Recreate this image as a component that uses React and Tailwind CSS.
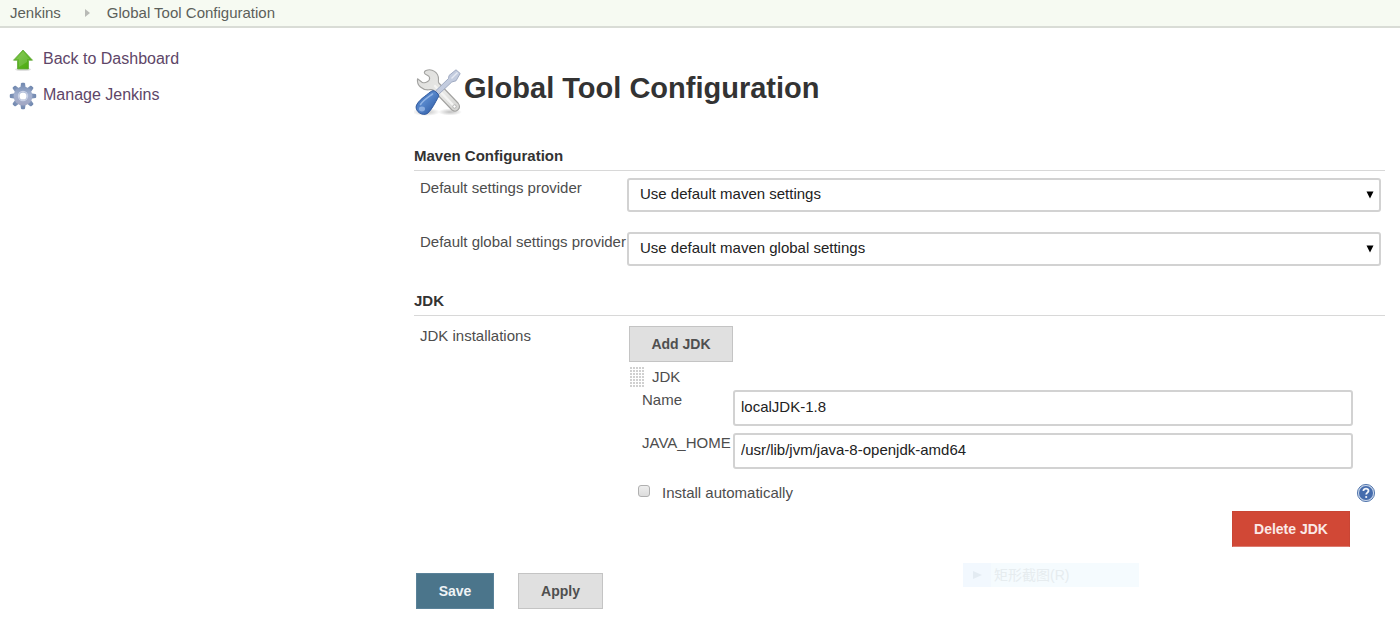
import React from "react";

function UpArrowIcon() {
  return (
    <svg width="26" height="26" viewBox="0 0 26 26" aria-hidden="true" className="shrink-0">
      <defs>
        <linearGradient id="arrowFill" x1="0" y1="0" x2="1" y2="1">
          <stop offset="0" stopColor="#7cc544" />
          <stop offset="0.5" stopColor="#5bb522" />
          <stop offset="1" stopColor="#4aa60e" />
        </linearGradient>
      </defs>
      <ellipse cx="13" cy="22.5" rx="8" ry="1.6" fill="#000" opacity="0.12" />
      <path d="M13 3 L22.5 13.2 H18.500 V22 H7.500 V13.2 H3.5 Z" fill="url(#arrowFill)" stroke="#62a83a" strokeWidth="0.8" strokeLinejoin="round" />
      <path d="M13 4.6 L19.8 12.2 H17 V15 L9 20 V12.2 H6 Z" fill="#fff" opacity="0.14" />
    </svg>
  );
}

function GearIcon() {
  const teeth = [0, 45, 90, 135, 180, 225, 270, 315];
  return (
    <svg width="28" height="28" viewBox="0 0 28 28" aria-hidden="true" className="shrink-0">
      <defs>
        <linearGradient id="gearFill" x1="0" y1="0" x2="0" y2="28" gradientUnits="userSpaceOnUse">
          <stop offset="0" stopColor="#6c84ac" />
          <stop offset="0.45" stopColor="#a3b1d0" />
          <stop offset="1" stopColor="#a3a3bd" />
        </linearGradient>
        <mask id="gearHole">
          <rect width="28" height="28" fill="#fff" />
          <circle cx="14" cy="14" r="3.600" fill="#000" />
        </mask>
      </defs>
      <g mask="url(#gearHole)" fill="url(#gearFill)">
        {teeth.map((a) => (
          <path key={a} d="M11 8 L12 1.600 Q12.200 0.800 13 0.800 H15 Q15.800 0.800 16 1.600 L17 8 Z" transform={`rotate(${a} 14 14)`} />
        ))}
        <circle cx="14" cy="14" r="9.400" />
        <circle cx="14" cy="14" r="4.600" fill="none" stroke="#c9d1e6" strokeWidth="1.200" />
      </g>
    </svg>
  );
}

function ToolsIcon() {
  return (
    <svg width="48" height="48" viewBox="0 0 48 48" aria-hidden="true" className="shrink-0">
      <defs>
        <linearGradient id="steel" x1="0" y1="0" x2="1" y2="1">
          <stop offset="0" stopColor="#dededc" />
          <stop offset="0.6" stopColor="#e8e8e6" />
          <stop offset="1" stopColor="#d2d2d0" />
        </linearGradient>
        <linearGradient id="handle" x1="0" y1="0" x2="1" y2="1">
          <stop offset="0" stopColor="#3565ae" />
          <stop offset="0.45" stopColor="#5585ca" />
          <stop offset="1" stopColor="#26529c" />
        </linearGradient>
        <radialGradient id="ground">
          <stop offset="0" stopColor="#000" stopOpacity="0.25" />
          <stop offset="1" stopColor="#000" stopOpacity="0" />
        </radialGradient>
      </defs>
      <ellipse cx="12" cy="44" rx="14" ry="4" fill="url(#ground)" />
      <ellipse cx="36" cy="44" rx="12" ry="3.5" fill="url(#ground)" />
      <path
        d="M12 2.500 C18 0 24.500 4.500 24.500 11 C24.500 13 24 14 24.800 15 L44 35 C48 40 42.500 45.500 38 42 L19 22 C18 21 17 21.500 15 21.800 C8.500 22.300 2.500 17.500 3.500 10.800 L8 14.200 C11 16 16.500 13 15.500 9.300 C15 7 11.500 7 10.500 5.200 C10 4 10.800 3 12 2.500 Z"
        fill="url(#steel)"
        stroke="#a2a2a0"
        strokeWidth="1.100"
        strokeLinejoin="round"
      />
      <path d="M21 18 L39 37" stroke="#f4f4f3" strokeWidth="2.400" strokeLinecap="round" />
      <circle cx="40.500" cy="38.500" r="1.700" fill="#fff" stroke="#a6a6a4" strokeWidth="0.8" />
      <path
        d="M21.500 23 L34.500 10.500 L35 7.500 L42 1.800 L46.200 5.500 L42 12.800 L37.800 14 L24.500 26.500 Z"
        fill="#c3ccdf"
        stroke="#98a4bc"
        strokeWidth="0.9"
        strokeLinejoin="round"
      />
      <path d="M37.500 10.500 L43.500 4.500" stroke="#e6eaf3" strokeWidth="1.500" />
      <path
        d="M16.500 23.800 C18.500 22.300 20 22.300 21.800 23.800 L24 26 C25.200 27.500 24.800 29 23.500 30.500 C21.500 34 18 41.500 13.500 45.500 C8.500 48.500 1 43.500 2.200 38 C4 32.500 11.500 28 16.500 23.800 Z"
        fill="url(#handle)"
        stroke="#2a549a"
        strokeWidth="0.9"
      />
      <path d="M6.500 36.500 C9 32.500 14.500 29 18.500 26" stroke="#8fb2e4" strokeWidth="1.600" strokeLinecap="round" fill="none" />
      <ellipse cx="8" cy="41" rx="3" ry="2.400" fill="#a4c2ec" opacity="0.7" />
    </svg>
  );
}

function HelpIcon() {
  return (
    <svg width="20" height="20" viewBox="0 0 20 20" aria-hidden="true">
      <circle cx="10" cy="10" r="8.600" fill="#c3d2e8" stroke="#5a7cb0" strokeWidth="1" />
      <circle cx="10" cy="10" r="7" fill="#456cad" />
      <path d="M7.400 8 C7.400 4.800 12.700 5 12.500 7.900 C12.400 9.700 10.200 9.700 10.200 11.600" fill="none" stroke="#f2f5fa" strokeWidth="1.800" />
      <circle cx="10.200" cy="14" r="1.100" fill="#f2f5fa" />
    </svg>
  );
}

function GripIcon() {
  const rows = [0, 3, 6, 9, 12, 15, 18];
  const cols = [0, 3, 6, 9, 12];
  return (
    <svg width="14" height="20" viewBox="0 0 14 20" aria-hidden="true" className="shrink-0">
      {rows.map((y) => cols.map((x) => <rect key={`${x}-${y}`} x={x} y={y} width="2" height="2" fill="#d0d0d0" />))}
    </svg>
  );
}

function SelectField({ id, label, value }) {
  return (
    <div className="grid grid-cols-[207px_1fr] items-start pl-[6px]">
      <label htmlFor={id} className="whitespace-nowrap text-[15px] leading-5 text-[#4d4d4d]">
        {label}
      </label>
      <div className="relative mr-1">
        <select
          id={id}
          className="block h-[34px] w-full appearance-none rounded-[3px] border-2 border-[#d2d2d2] bg-white pb-px pl-[11px] pr-8 text-[15px] text-[#222222]"
        >
          <option>{value}</option>
        </select>
        <svg width="8" height="8" viewBox="0 0 8 8" aria-hidden="true" className="pointer-events-none absolute right-[7px] top-[13px]">
          <path d="M0.500 0.500 H7.500 L4 7.500 Z" fill="#000" />
        </svg>
      </div>
    </div>
  );
}

function TextField({ id, label, value }) {
  return (
    <div className="grid grid-cols-[91px_1fr] items-start">
      <label htmlFor={id} className="text-[15px] leading-5 text-[#4d4d4d]">
        {label}
      </label>
      <input
        id={id}
        type="text"
        defaultValue={value}
        className="block h-9 w-full rounded-[3px] border-2 border-[#d2d2d2] bg-white px-[6px] pb-[3px] text-[15px] text-[#222222]"
      />
    </div>
  );
}

const grayButton = "h-9 border border-[#c4c4c4] bg-[#e0e0e0] text-[14px] font-bold text-[#4f4f4f]";
const sectionTitle = "h-[27px] border-b border-[#d8d8d8] text-[15px] font-bold leading-6";

export default function App() {
  return (
    <div className="relative min-h-screen bg-white font-['Liberation_Sans',Arial,sans-serif] text-[#333333]">
      <nav aria-label="Breadcrumb" className="flex h-7 items-center border-b-2 border-[#d9dcd6] bg-[#f6faf2] pl-[10px] text-[15px] text-[#5c5f5a]">
        <a href="#jenkins">Jenkins</a>
        <svg width="5" height="8" viewBox="0 0 5 8" aria-hidden="true" className="ml-6 mr-[17px]">
          <path d="M0 0 L5 4 L0 8 Z" fill="#b8bab6" />
        </svg>
        <a href="#tools">Global Tool Configuration</a>
      </nav>

      <div className="flex">
        <aside className="w-[414px] shrink-0 pt-[18px] pl-[9px] text-[16px] text-[#5e4668]">
          <a href="#dashboard" className="flex h-7 items-center gap-[6px]">
            <span className="flex w-7 justify-center">
              <UpArrowIcon />
            </span>
            <span className="pb-[2px]">Back to Dashboard</span>
          </a>
          <a href="#manage" className="mt-2 flex h-7 items-center gap-[6px]">
            <GearIcon />
            <span className="pb-[2px]">Manage Jenkins</span>
          </a>
        </aside>

        <main className="min-w-0 flex-1 pr-[15px] pt-10">
          <h1 className="flex h-12 items-center gap-[2px] text-[29px] font-bold">
            <ToolsIcon />
            <span className="pb-[6px]">Global Tool Configuration</span>
          </h1>

          <form onSubmit={(e) => e.preventDefault()}>
            <section className="pt-7">
              <h2 className={sectionTitle}>Maven Configuration</h2>
              <div className="flex flex-col gap-5 pt-[7px]">
                <SelectField id="settings" label="Default settings provider" value="Use default maven settings" />
                <SelectField id="global-settings" label="Default global settings provider" value="Use default maven global settings" />
              </div>
            </section>

            <section className="pt-[23px]">
              <h2 className={sectionTitle}>JDK</h2>
              <div className="grid grid-cols-[209px_1fr] items-start pl-[6px] pt-[10px]">
                <h3 className="text-[15px] leading-5 text-[#4d4d4d]">JDK installations</h3>
                <div>
                  <button type="button" className={`${grayButton} w-[104px]`}>
                    Add JDK
                  </button>
                  <div className="mt-[5px] flex h-5 items-center gap-2 pl-px text-[15px] text-[#4d4d4d]">
                    <GripIcon />
                    JDK
                  </div>
                  <div className="flex flex-col gap-[7px] pl-[13px] pr-8 pt-[3px]">
                    <TextField id="jdk-name" label="Name" value="localJDK-1.8" />
                    <TextField id="java-home" label="JAVA_HOME" value="/usr/lib/jvm/java-8-openjdk-amd64" />
                  </div>
                  <div className="mt-[14px] flex h-5 items-center justify-between pl-[9px] pr-[9px]">
                    <label className="flex items-center gap-3 text-[15px] leading-5 text-[#4d4d4d]">
                      <input
                        type="checkbox"
                        className="mb-1 h-3 w-3 appearance-none rounded-[3px] border border-[#b0b0b0] bg-gradient-to-b from-[#eeeeee] to-[#dddddd]"
                      />
                      Install automatically
                    </label>
                    <a href="#help" aria-label="Help">
                      <HelpIcon />
                    </a>
                  </div>
                  <div className="mt-2 flex justify-end pr-[35px]">
                    <button
                      type="button"
                      className="h-9 w-[118px] border border-[#c94534] border-b-[#dc7c70] bg-[#d14836] text-[14px] font-bold text-[#fbe9e7]"
                    >
                      Delete JDK
                    </button>
                  </div>
                </div>
              </div>
            </section>

            <div className="flex gap-6 pb-2 pl-[2px] pt-[26px]">
              <button type="submit" className="h-9 w-[78px] border border-[#5a8299] bg-[#4b758b] text-[14px] font-bold text-[#eef3f6]">
                Save
              </button>
              <button type="button" className={`${grayButton} w-[85px]`}>
                Apply
              </button>
            </div>
          </form>
        </main>
      </div>

      <div className="pointer-events-none absolute right-[261px] top-[563px] flex h-6 w-44 items-center bg-[#f5fbfe] font-['Liberation_Sans','Noto_Sans_CJK_SC',sans-serif] text-[14px] text-[#e6ecef]">
        <span className="flex h-6 w-7 items-center justify-center bg-[#f2f8fe]">
          <svg width="9" height="8" viewBox="0 0 9 8" aria-hidden="true">
            <path d="M0 0 L9 4 L0 8 Z" fill="#e3ebf2" />
          </svg>
        </span>
        <span className="pl-[3px]">矩形截图(R)</span>
      </div>
    </div>
  );
}
